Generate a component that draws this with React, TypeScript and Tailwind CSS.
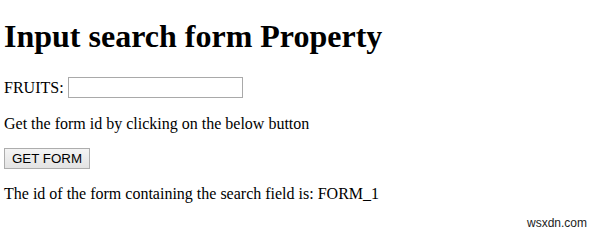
export default function App() {
  return (
    <div className="relative h-[233px] w-[599px] overflow-hidden bg-white pl-[4px] font-['Liberation_Serif',serif] text-[16px] text-black">
      <h1 className="mt-[18px] text-[32px] leading-[36px] font-bold">Input search form Property</h1>

      <form id="FORM_1" className="mt-[23px] flex h-[21px] items-center">
        <label htmlFor="fruits" className="mr-[4px] leading-[18px]">
          FRUITS:
        </label>
        <input
          id="fruits"
          type="search"
          className="h-[21px] w-[175px] border border-[#a9a9a9] bg-white px-[2px] font-['Liberation_Sans',sans-serif] text-[13px] outline-none"
        />
      </form>

      <p className="mt-[17px] leading-[18px]">Get the form id by clicking on the below button</p>

      <button
        type="button"
        className="mt-[15px] flex h-[21px] w-[86px] items-center justify-center border border-[#adadad] bg-gradient-to-b from-[#f4f4f4] to-[#e3e3e3] font-['Liberation_Sans',sans-serif] text-[13.33px] leading-none"
      >
        GET FORM
      </button>

      <p className="mt-[16px] leading-[18px]">The id of the form containing the search field is: FORM_1</p>

      <span className="absolute right-[12px] bottom-[3px] font-['Liberation_Sans',sans-serif] text-[12px] leading-[14px] text-[#222]">
        wsxdn.com
      </span>
    </div>
  );
}
